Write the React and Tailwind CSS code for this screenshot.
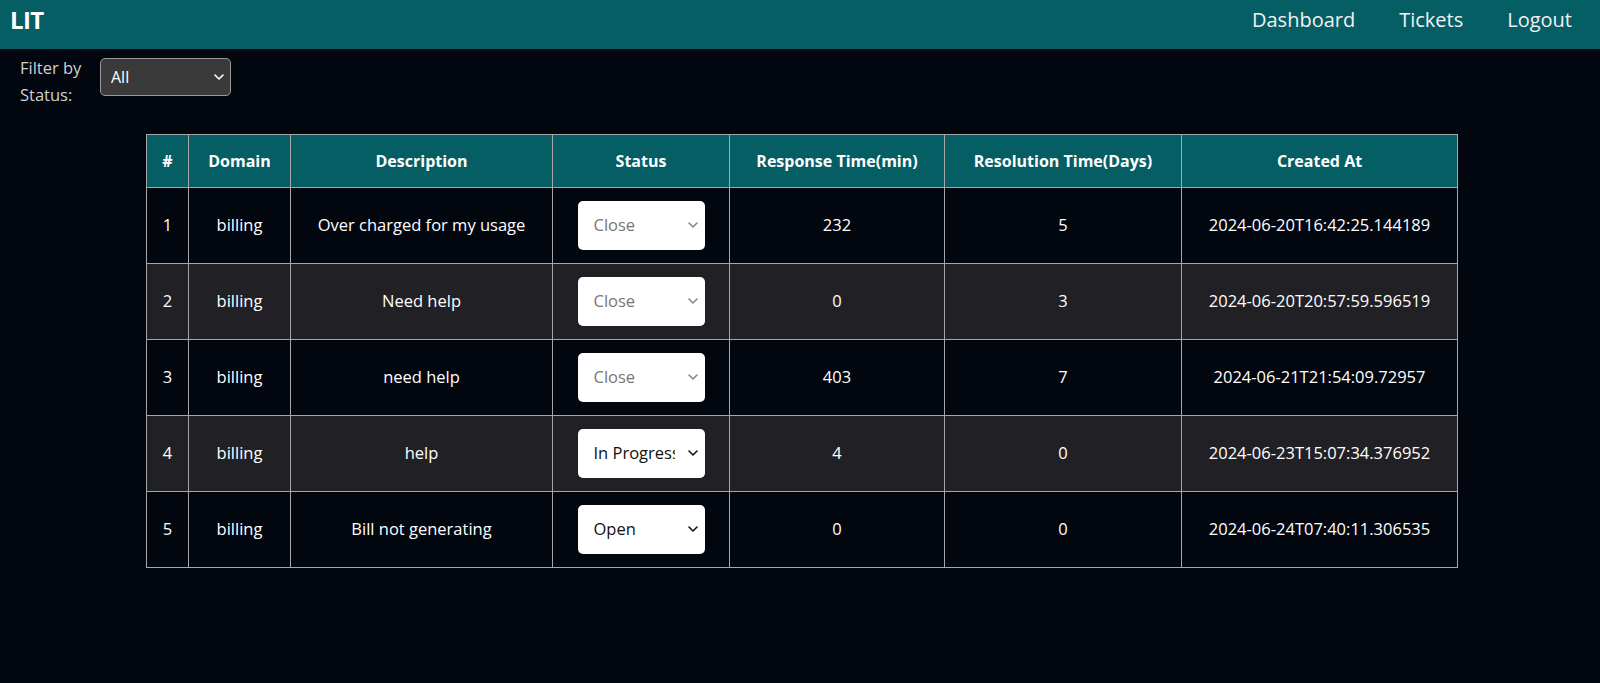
import React, { useState } from 'react';

const tickets = [
  { id: 1, domain: 'billing', description: 'Over charged for my usage', status: 'Close', response: 232, resolution: 5, created: '2024-06-20T16:42:25.144189' },
  { id: 2, domain: 'billing', description: 'Need help', status: 'Close', response: 0, resolution: 3, created: '2024-06-20T20:57:59.596519' },
  { id: 3, domain: 'billing', description: 'need help', status: 'Close', response: 403, resolution: 7, created: '2024-06-21T21:54:09.72957' },
  { id: 4, domain: 'billing', description: 'help', status: 'In Progress', response: 4, resolution: 0, created: '2024-06-23T15:07:34.376952' },
  { id: 5, domain: 'billing', description: 'Bill not generating', status: 'Open', response: 0, resolution: 0, created: '2024-06-24T07:40:11.306535' },
];

const Chevron = ({ className }) => (
  <svg viewBox="0 0 10 6" className={className} fill="none" stroke="currentColor" strokeWidth="1.6" strokeLinecap="round" strokeLinejoin="round">
    <polyline points="1,1 5,5 9,1" />
  </svg>
);

const StatusSelect = ({ value }) => {
  const closed = value === 'Close';
  return (
    <div className="relative mx-auto w-[127px] h-[49px]">
      <select
        defaultValue={value}
        disabled={closed}
        className={`appearance-none w-full h-full rounded-[5px] bg-white pl-[16px] pr-[30px] text-[16.5px] outline-none ${closed ? 'text-[#777]' : 'text-[#111]'}`}
      >
        <option>Open</option>
        <option>In Progress</option>
        <option>Close</option>
      </select>
      <Chevron className={`absolute right-[7px] top-[21px] w-[10px] h-[6px] pointer-events-none ${closed ? 'text-[#888]' : 'text-[#111]'}`} />
    </div>
  );
};

const App = () => {
  const [filter, setFilter] = useState('All');
  const rows = filter === 'All' ? tickets : tickets.filter(t => t.status === filter);

  return (
    <div className="min-h-screen bg-[#02060f] text-white" style={{ fontFamily: '"Open Sans", "Noto Sans", sans-serif' }}>
      <nav className="h-[49px] bg-[#045e64] flex items-center justify-between pl-[10px] pr-[28px] pb-[9px]">
        <span className="text-[24px] font-bold tracking-tight">LIT</span>
        <div className="flex items-center gap-[44px] text-[20px] text-[#f2f2f2]">
          <a href="#">Dashboard</a>
          <a href="#">Tickets</a>
          <a href="#">Logout</a>
        </div>
      </nav>

      <div className="flex items-start pl-[20px] pt-[5px] gap-[14px]">
        <label className="w-[66px] text-[16.5px] leading-[27px] text-[#d0d0d0]">Filter by Status:</label>
        <div className="relative mt-[4px] w-[131px] h-[38px]">
          <select
            value={filter}
            onChange={e => setFilter(e.target.value)}
            className="appearance-none w-full h-full rounded-[5px] border border-[#9a9a9a] bg-[#3a3a3a] pl-[10px] text-base text-white outline-none"
          >
            <option>All</option>
            <option>Open</option>
            <option>In Progress</option>
            <option>Close</option>
          </select>
          <Chevron className="absolute right-[7px] top-[16px] w-[10px] h-[6px] text-white pointer-events-none" />
        </div>
      </div>

      <table className="table-fixed border-collapse w-[1311px] ml-[146px] mt-[26px] text-[16.5px] text-center">
        <thead>
          <tr className="h-[53px] bg-[#045e64] text-base font-bold">
            <th className="w-[42px] border border-[#a6a6a6]">#</th>
            <th className="w-[102px] border border-[#a6a6a6]">Domain</th>
            <th className="w-[262px] border border-[#a6a6a6]">Description</th>
            <th className="w-[177px] border border-[#a6a6a6]">Status</th>
            <th className="w-[215px] border border-[#a6a6a6]">Response Time(min)</th>
            <th className="w-[237px] border border-[#a6a6a6]">Resolution Time(Days)</th>
            <th className="w-[276px] border border-[#a6a6a6]">Created At</th>
          </tr>
        </thead>
        <tbody>
          {rows.map((t, i) => (
            <tr key={t.id} className={`h-[76px] ${i % 2 === 1 ? 'bg-[#212125]' : 'bg-[#02060f]'}`}>
              <td className="border border-[#a6a6a6]">{t.id}</td>
              <td className="border border-[#a6a6a6]">{t.domain}</td>
              <td className="border border-[#a6a6a6]">{t.description}</td>
              <td className="border border-[#a6a6a6]"><StatusSelect value={t.status} /></td>
              <td className="border border-[#a6a6a6]">{t.response}</td>
              <td className="border border-[#a6a6a6]">{t.resolution}</td>
              <td className="border border-[#a6a6a6]">{t.created}</td>
            </tr>
          ))}
        </tbody>
      </table>
    </div>
  );
};

export default App;
